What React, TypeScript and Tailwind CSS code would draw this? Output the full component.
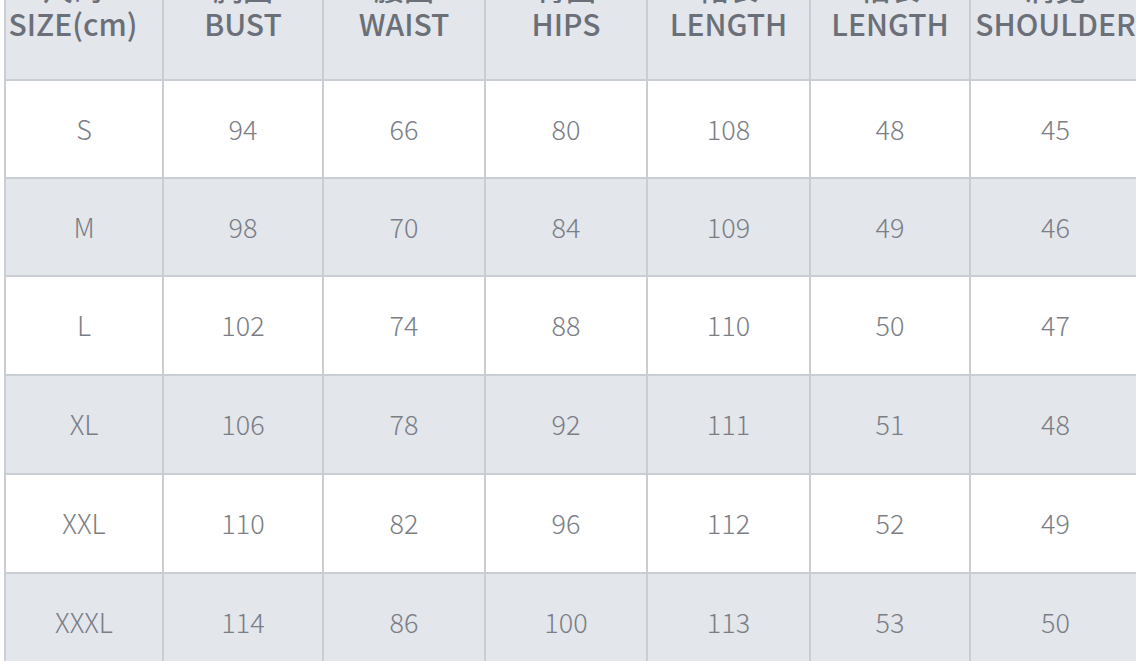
const headers = [
  { zh: '尺码', en: 'SIZE(cm)' },
  { zh: '胸围', en: 'BUST' },
  { zh: '腰围', en: 'WAIST' },
  { zh: '臀围', en: 'HIPS' },
  { zh: '裙长', en: 'LENGTH' },
  { zh: '袖长', en: 'LENGTH' },
  { zh: '肩宽', en: 'SHOULDER' },
];

const rows = [
  { h: 'h-[98px]', cells: ['S', '94', '66', '80', '108', '48', '45'] },
  { h: 'h-[98px]', cells: ['M', '98', '70', '84', '109', '49', '46'] },
  { h: 'h-[99px]', cells: ['L', '102', '74', '88', '110', '50', '47'] },
  { h: 'h-[99px]', cells: ['XL', '106', '78', '92', '111', '51', '48'] },
  { h: 'h-[99px]', cells: ['XXL', '110', '82', '96', '112', '52', '49'] },
  { h: 'h-[98px]', cells: ['XXXL', '114', '86', '100', '113', '53', '50'] },
];

const font = { fontFamily: '"Noto Sans CJK SC", "Noto Sans", sans-serif' };

export default function App() {
  return (
    <div className="h-[661px] w-[1136px] overflow-hidden bg-white" style={font}>
      {/* the chart is cropped at the top, so the Chinese header line sits mostly above the frame */}
      <div className="ml-[4px] -mt-[39px] grid w-[1136px] grid-cols-[158px_160px_162px_162px_163px_160px_171px] border-l-2 border-[#c9cdd4]">
        {headers.map((h, i) => (
          <div
            key={i}
            className={`flex h-[120px] flex-col items-center whitespace-nowrap border-r-2 border-b-2 border-[#c9cdd4] bg-[#e3e6eb] pt-[8px] text-[30px] font-medium leading-[36px] text-[#6b6f78] ${
              i === 0 ? 'pr-[22px]' : ''
            }`}
          >
            <span>{h.zh}</span>
            <span>{h.en}</span>
          </div>
        ))}
        {rows.map((r, ri) =>
          r.cells.map((c, ci) => (
            <div
              key={`${ri}-${ci}`}
              className={`flex ${r.h} items-center justify-center border-r-2 border-b-2 border-[#c9cdd4] text-[27px] font-light text-[#7a7e86] ${
                ri % 2 === 1 ? 'bg-[#e3e6eb]' : 'bg-white'
              }`}
            >
              {c}
            </div>
          ))
        )}
      </div>
    </div>
  );
}
